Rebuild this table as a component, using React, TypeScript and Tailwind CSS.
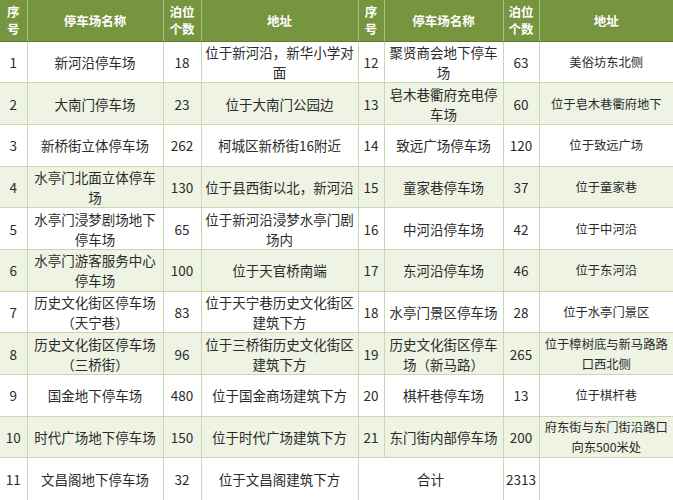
type Row = {
    no: string;
    name: string;
    count: string;
    addr: string;
};

const left: Row[] = [
    { no: "1", name: "新河沿停车场", count: "18", addr: "位于新河沿，新华小学对面" },
    { no: "2", name: "大南门停车场", count: "23", addr: "位于大南门公园边" },
    { no: "3", name: "新桥街立体停车场", count: "262", addr: "柯城区新桥街16附近" },
    { no: "4", name: "水亭门北面立体停车场", count: "130", addr: "位于县西街以北，新河沿" },
    { no: "5", name: "水亭门浸梦剧场地下停车场", count: "65", addr: "位于新河沿浸梦水亭门剧场内" },
    { no: "6", name: "水亭门游客服务中心停车场", count: "100", addr: "位于天官桥南端" },
    { no: "7", name: "历史文化街区停车场（天宁巷）", count: "83", addr: "位于天宁巷历史文化街区建筑下方" },
    { no: "8", name: "历史文化街区停车场（三桥街）", count: "96", addr: "位于三桥街历史文化街区建筑下方" },
    { no: "9", name: "国金地下停车场", count: "480", addr: "位于国金商场建筑下方" },
    { no: "10", name: "时代广场地下停车场", count: "150", addr: "位于时代广场建筑下方" },
    { no: "11", name: "文昌阁地下停车场", count: "32", addr: "位于文昌阁建筑下方" },
];

const right: Row[] = [
    { no: "12", name: "聚贤商会地下停车场", count: "63", addr: "美俗坊东北侧" },
    { no: "13", name: "皂木巷衢府充电停车场", count: "60", addr: "位于皂木巷衢府地下" },
    { no: "14", name: "致远广场停车场", count: "120", addr: "位于致远广场" },
    { no: "15", name: "童家巷停车场", count: "37", addr: "位于童家巷" },
    { no: "16", name: "中河沿停车场", count: "42", addr: "位于中河沿" },
    { no: "17", name: "东河沿停车场", count: "46", addr: "位于东河沿" },
    { no: "18", name: "水亭门景区停车场", count: "28", addr: "位于水亭门景区" },
    { no: "19", name: "历史文化街区停车场（新马路）", count: "265", addr: "位于樟树底与新马路路口西北侧" },
    { no: "20", name: "棋杆巷停车场", count: "13", addr: "位于棋杆巷" },
    { no: "21", name: "东门街内部停车场", count: "200", addr: "府东街与东门街沿路口向东500米处" },
];

const headers = ["序号", "停车场名称", "泊位个数", "地址", "序号", "停车场名称", "泊位个数", "地址"];

const td = "border border-[#cbd6b4] px-[2px] text-center align-middle";

export default function App() {
    return (
        <div
            className="w-[673px] h-[500px] overflow-hidden bg-white text-[#2b2b2b] text-[13.5px] leading-[20px]"
            style={{ fontFamily: '"Noto Sans CJK SC", "Noto Sans", sans-serif' }}
        >
            <table className="w-[673px] table-fixed border-collapse border-hidden">
                <colgroup>
                    <col className="w-[27px]" />
                    <col className="w-[136px]" />
                    <col className="w-[38px]" />
                    <col className="w-[157px]" />
                    <col className="w-[26px]" />
                    <col className="w-[119px]" />
                    <col className="w-[36px]" />
                    <col className="w-[134px]" />
                </colgroup>
                <thead>
                    <tr className="h-[41px] bg-[#76953f] text-white font-bold text-[12.5px] leading-[17px]">
                        {headers.map((h, i) => (
                            <th key={i} className="border border-[#a9bd8a] border-b-[#5f7d33] px-[1px] text-center align-middle">
                                {h}
                            </th>
                        ))}
                    </tr>
                </thead>
                <tbody>
                    {left.map((l, i) => {
                        const r = right[i];
                        const bg = i % 2 === 1 ? "bg-[#eef3e4]" : "bg-white";
                        return (
                            <tr key={l.no} className="h-[41.7px]">
                                <td className={`${td} ${bg}`}>{l.no}</td>
                                <td className={`${td} ${bg}`}>{l.name}</td>
                                <td className={`${td} ${bg}`}>{l.count}</td>
                                <td className={`${td} ${bg}`}>{l.addr}</td>
                                {r ? (
                                    <>
                                        <td className={`${td} ${bg}`}>{r.no}</td>
                                        <td className={`${td} ${bg}`}>{r.name}</td>
                                        <td className={`${td} ${bg}`}>{r.count}</td>
                                        <td className={`${td} ${bg} text-[12.3px]`}>{r.addr}</td>
                                    </>
                                ) : (
                                    <>
                                        <td colSpan={2} className={`${td} bg-white`}>合计</td>
                                        <td className={`${td} bg-white`}>2313</td>
                                        <td className={`${td} bg-white`}></td>
                                    </>
                                )}
                            </tr>
                        );
                    })}
                </tbody>
            </table>
        </div>
    );
}
